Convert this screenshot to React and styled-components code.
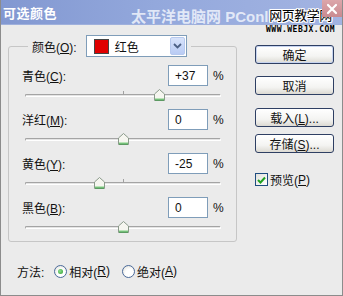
import React from 'react';
import styled, { createGlobalStyle } from 'styled-components';

const GlobalStyle = createGlobalStyle`
  html, body {
    margin: 0;
    padding: 0;
    background: #ebebeb;
  }
  body {
    font-family: 'Liberation Sans', 'Noto Sans CJK SC', sans-serif;
    font-size: 12px;
    color: #111;
  }
`;

const Window = styled.div`
  position: relative;
  width: 343px;
  height: 296px;
  box-sizing: border-box;
  background: #ebebeb;
  border: 1px solid #8c8c8c;
  border-top: none;
  display: flex;
  flex-direction: column;
  overflow: hidden;
`;

const TitleBar = styled.div`
  height: 24px;
  flex: none;
  display: flex;
  align-items: center;
  padding-left: 2px;
  background: linear-gradient(to right, #8298d1 0%, #93a8dc 45%, #a3b4e2 100%);
  border-bottom: 1px solid #9fb0dc;
`;

const Title = styled.span`
  color: #fff;
  font-weight: bold;
  font-size: 13px;
  letter-spacing: 0.5px;
`;

const Watermark = styled.span`
  position: absolute;
  left: 130px;
  top: 5px;
  font-size: 15px;
  font-weight: bold;
  color: rgba(240, 244, 252, 0.85);
  white-space: nowrap;
`;

const Stamp = styled.div`
  position: absolute;
  left: 265px;
  top: 5px;
  display: flex;
  flex-direction: column;
  align-items: center;
`;

const StampTitle = styled.span`
  font-size: 13px;
  color: #000;
  letter-spacing: -0.5px;
  text-shadow: 1px 0 #fff, -1px 0 #fff, 0 1px #fff, 0 -1px #fff, 1px 1px #fff, -1px -1px #fff, 1px -1px #fff, -1px 1px #fff;
`;

const StampUrl = styled.span`
  font-family: 'DejaVu Sans Mono', monospace;
  font-size: 8px;
  font-weight: bold;
  letter-spacing: 0.5px;
  line-height: 8px;
  margin-top: 2px;
  color: #000;
`;

const CloseButton = styled.div`
  position: absolute;
  right: 0;
  top: 0;
  width: 20px;
  height: 17px;
  background: linear-gradient(#dca6aa, #c98a90);
  display: flex;
  align-items: center;
  justify-content: center;
`;

const Body = styled.div`
  flex: 1;
  display: flex;
`;

const LeftColumn = styled.div`
  width: 236px;
  padding-top: 10px;
  display: flex;
  flex-direction: column;
`;

const GroupBox = styled.fieldset`
  margin: 0 0 0 7px;
  width: 229px;
  box-sizing: border-box;
  min-width: 0;
  padding: 8px 14px 0 13px;
  border: 1px solid #c6c6c6;
  border-radius: 3px;
`;

const Legend = styled.legend`
  margin-left: 6px;
  padding: 0 4px;
  display: flex;
  align-items: center;
`;

const Select = styled.div`
  margin-left: 9px;
  width: 101px;
  height: 22px;
  box-sizing: border-box;
  border: 1px solid #7f9db9;
  background: #fff;
  display: flex;
  align-items: center;
  padding-left: 7px;
`;

const Swatch = styled.span`
  width: 15px;
  height: 15px;
  box-sizing: border-box;
  background: ${p => p.color};
  border: 1px solid #444;
  margin-right: 6px;
`;

const SelectText = styled.span`
  flex: 1;
`;

const SelectArrow = styled.span`
  width: 15px;
  height: 18px;
  margin-right: 1px;
  box-sizing: border-box;
  border: 1px solid #b7c9ee;
  border-radius: 2px;
  background: linear-gradient(#d8e3fb, #b9cbf4);
  display: flex;
  align-items: center;
  justify-content: center;
`;

const Row = styled.div`
  display: flex;
  flex-direction: column;
`;

const RowHead = styled.div`
  height: 21px;
  display: flex;
  align-items: center;
`;

const Label = styled.span`
  flex: 1;
`;

const NumberBox = styled.div`
  width: 40px;
  height: 21px;
  box-sizing: border-box;
  border: 1px solid #7f9db9;
  background: #fff;
  padding-left: 6px;
  display: flex;
  align-items: center;
`;

const Percent = styled.span`
  width: 9px;
  margin-left: 5px;
`;

const Slider = styled.div`
  position: relative;
  height: 23px;
  margin: 0 1px 0 3px;
`;

const Track = styled.div`
  position: absolute;
  left: 0;
  right: 0;
  top: 8px;
  height: 3px;
  box-sizing: border-box;
  border: 1px solid #a4a4a4;
  border-bottom-color: #fff;
  border-right-color: #fff;
  border-radius: 2px;
  background: #e4e4e4;
`;

const Tick = styled.div`
  position: absolute;
  left: 50%;
  top: 5px;
  width: 1px;
  height: 4px;
  background: #a0a0a0;
`;

const Thumb = styled.svg`
  position: absolute;
  top: 3px;
  margin-left: -5px;
`;

const MethodRow = styled.div`
  margin: 21px 0 0 16px;
  height: 16px;
  display: flex;
  align-items: center;
`;

const RadioItem = styled.label`
  display: flex;
  align-items: center;
  margin-left: ${p => p.gap}px;
`;

const Radio = styled.span`
  width: 13px;
  height: 13px;
  box-sizing: border-box;
  border-radius: 50%;
  border: 1px solid #4a6a9a;
  background: radial-gradient(circle at 60% 65%, #fff 40%, #dcdcd4 100%);
  display: flex;
  align-items: center;
  justify-content: center;
  margin-right: 2px;
`;

const RadioDot = styled.span`
  width: 5px;
  height: 5px;
  border-radius: 50%;
  background: radial-gradient(circle at 40% 40%, #8fe08f, #2a9a2a);
`;

const RightColumn = styled.div`
  padding: 20px 0 0 18px;
  display: flex;
  flex-direction: column;
`;

const Button = styled.div`
  width: 79px;
  height: 19px;
  box-sizing: border-box;
  border: 1px solid #2e3f63;
  border-radius: 3px;
  background: linear-gradient(#ffffff, #f4f4f2 60%, #dcdad3);
  box-shadow: ${p => (p.primary ? 'inset 0 0 0 1px #c6d3ef' : 'none')};
  display: flex;
  align-items: center;
  justify-content: center;
  margin-top: ${p => p.gap}px;
`;

const Check = styled.label`
  display: flex;
  align-items: center;
  margin-top: 18px;
`;

const CheckBox = styled.span`
  width: 13px;
  height: 13px;
  box-sizing: border-box;
  border: 1px solid #1f4d80;
  background: linear-gradient(135deg, #e2e2dc, #fff);
  display: flex;
  align-items: center;
  justify-content: center;
  margin-right: 2px;
`;

const Key = styled.u`
  text-decoration: underline;
  text-underline-offset: 1px;
`;

const channels = [
  { name: '青色', key: 'C', value: 37, text: '+37' },
  { name: '洋红', key: 'M', value: 0, text: '0' },
  { name: '黄色', key: 'Y', value: -25, text: '-25' },
  { name: '黑色', key: 'B', value: 0, text: '0' },
];

const ThumbIcon = ({ pos }) => (
  <Thumb width="11" height="12" viewBox="0 0 11 12" style={{ left: `${pos}%` }}>
    <path d="M0.5 5 L5.5 0.5 L10.5 5 L10.5 11.5 L0.5 11.5 Z" fill="#f6f6f0" stroke="#8a9a8a" />
    <path d="M1 10 H10" stroke="#7fcf7f" />
    <path d="M1 11 H10" stroke="#2f9a3a" />
  </Thumb>
);

const ChannelRow = ({ channel }) => (
  <Row>
    <RowHead>
      <Label>
        {channel.name}(<Key>{channel.key}</Key>):
      </Label>
      <NumberBox>{channel.text}</NumberBox>
      <Percent>%</Percent>
    </RowHead>
    <Slider>
      <Track />
      <Tick />
      <ThumbIcon pos={(channel.value + 100) / 2} />
    </Slider>
  </Row>
);

export default function App() {
  return (
    <>
      <GlobalStyle />
      <Window>
        <TitleBar>
          <Title>可选颜色</Title>
        </TitleBar>
        <Watermark>太平洋电脑网 PConline</Watermark>
        <Stamp>
          <StampTitle>网页教学网</StampTitle>
          <StampUrl>WWW.WEBJX.COM</StampUrl>
        </Stamp>
        <CloseButton>
          <svg width="12" height="12" viewBox="0 0 12 12">
            <path d="M2 2 L10 10 M10 2 L2 10" stroke="#fff" strokeWidth="2.2" strokeLinecap="round" />
          </svg>
        </CloseButton>
        <Body>
          <LeftColumn>
            <GroupBox>
              <Legend>
                <span>
                  颜色(<Key>O</Key>):
                </span>
                <Select>
                  <Swatch color="#e00000" />
                  <SelectText>红色</SelectText>
                  <SelectArrow>
                    <svg width="9" height="6" viewBox="0 0 9 6">
                      <path d="M1 1 L4.5 4.5 L8 1" fill="none" stroke="#4d6185" strokeWidth="1.8" />
                    </svg>
                  </SelectArrow>
                </Select>
              </Legend>
              {channels.map(c => (
                <ChannelRow key={c.key} channel={c} />
              ))}
            </GroupBox>
            <MethodRow>
              <span>方法:</span>
              <RadioItem gap={10}>
                <Radio>
                  <RadioDot />
                </Radio>
                相对(<Key>R</Key>)
              </RadioItem>
              <RadioItem gap={12}>
                <Radio />
                绝对(<Key>A</Key>)
              </RadioItem>
            </MethodRow>
          </LeftColumn>
          <RightColumn>
            <Button primary gap={0}>确定</Button>
            <Button gap={12}>取消</Button>
            <Button gap={13}>
              <span>
                载入(<Key>L</Key>)...
              </span>
            </Button>
            <Button gap={7}>
              <span>
                存储(<Key>S</Key>)...
              </span>
            </Button>
            <Check>
              <CheckBox>
                <svg width="9" height="8" viewBox="0 0 9 8">
                  <path d="M1 4 L3.5 6.5 L8 1.5" fill="none" stroke="#21a121" strokeWidth="2" />
                </svg>
              </CheckBox>
              预览(<Key>P</Key>)
            </Check>
          </RightColumn>
        </Body>
      </Window>
    </>
  );
}
